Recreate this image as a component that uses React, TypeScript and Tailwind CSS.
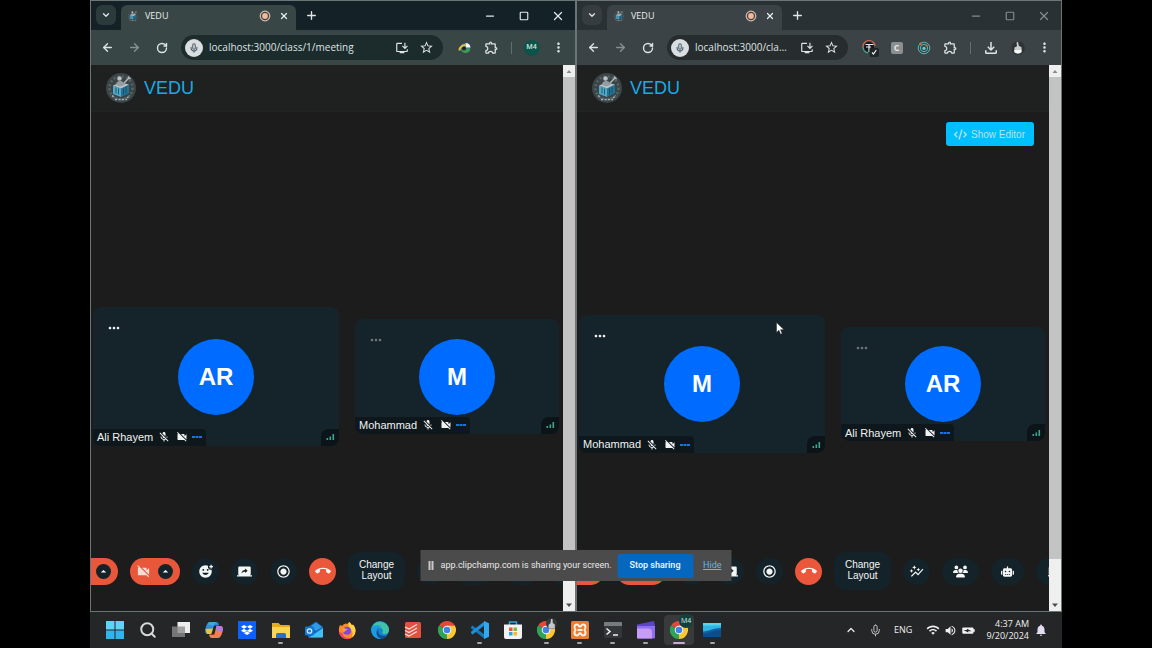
import type { ReactNode } from "react";
import { ArrowLeft, ArrowRight, ChevronDown, ChevronUp, Mic, Minus, Plus, RotateCw, Search, Square, X } from "lucide-react";
import {
  MdAddReaction,
  MdArrowDropUp,
  MdAutoGraph,
  MdBatteryChargingFull,
  MdCallEnd,
  MdMicOff,
  MdMoreHoriz,
  MdMoreVert,
  MdNotifications,
  MdOutlineExtension,
  MdOutlineFileDownload,
  MdOutlineInstallDesktop,
  MdRadioButtonChecked,
  MdScreenShare,
  MdStarBorder,
  MdVideocamOff,
  MdVolumeUp,
  MdWifi,
} from "react-icons/md";
import { FaChalkboard, FaCode, FaDropbox, FaRobot, FaUsers } from "react-icons/fa6";

type Theme = "teal" | "slate";

const themes = {
  teal: {
    strip: "bg-[#142227]",
    bar: "bg-[#384646]",
    chip: "bg-[#2b3b3c]",
    pill: "bg-[#1c2b2c]",
    controls: "text-[#e2e6e6]",
  },
  slate: {
    strip: "bg-[#2a3134]",
    bar: "bg-[#3c4347]",
    chip: "bg-[#363c3f]",
    pill: "bg-[#272c2e]",
    controls: "text-[#85898b]",
  },
};

function Emblem({ className }: { className: string }) {
  return (
    <svg viewBox="0 0 30 30" className={className} aria-hidden="true">
      <circle cx="15" cy="15" r="15" fill="#3b4547" />
      <circle cx="15" cy="15" r="11.5" fill="none" stroke="#8d9899" strokeWidth="2.600" strokeDasharray="2 2.200" opacity=".35" />
      <circle cx="15" cy="14" r="9.500" fill="#3b4547" />
      <path d="M7 12.500l8 3v8.500l-8-3z" fill="#4fa9c8" />
      <path d="M23 11.500l-8 4V24l8-4z" fill="#1f7599" />
      <path d="M7 12.500l7.500-3 8.500 2-8 4z" fill="#b9c3c6" />
      <path d="M10 14.500v6M12.500 15.500v6M17.500 15.500v6M20 14v6" stroke="#21444f" strokeWidth=".8" />
      <circle cx="13.500" cy="5.500" r="2.300" fill="#b9c1c3" />
      <path d="M10 12c0-3 2-4 4-4s4.500 1.500 4.500 4L14 13.500z" fill="#939ea1" />
      <path d="M18 10l5.500-5.500M22 3.500l2.500 2.500" stroke="#b5bec0" strokeWidth="1.400" />
      <path d="M6 22.500l3 2.500M9 26.500h12M21 25l3-2.500" stroke="#aab5b7" strokeWidth="1.500" strokeDasharray="2 1.500" />
    </svg>
  );
}

function BarButton({ label, children, dim = false }: { label: string; children: ReactNode; dim?: boolean }) {
  return (
    <button
      type="button"
      aria-label={label}
      className={`flex h-6 w-[27px] shrink-0 items-center justify-center ${dim ? "text-[#879193]" : "text-[#dfe4e4]"}`}
    >
      {children}
    </button>
  );
}

function TabStrip({ theme }: { theme: Theme }) {
  const t = themes[theme];
  return (
    <div className={`flex h-[29px] shrink-0 items-end ${t.strip}`}>
      <button
        type="button"
        aria-label="Search tabs"
        className={`mb-[5px] ml-[5px] flex h-5 w-5 items-center justify-center rounded-md text-[#e2e6e6] ${t.chip}`}
      >
        <ChevronDown size={10} strokeWidth={3} />
      </button>
      <div className={`ml-[5px] flex h-[25px] w-[175px] items-center rounded-t-md pb-[3px] pl-1.5 pr-[7px] ${t.bar}`}>
        <Emblem className="h-3 w-3" />
        <span className="ml-1.5 flex-1 text-[9px] text-[#e8ecec]">VEDU</span>
        <svg viewBox="0 0 12 12" className="mr-2 h-3 w-3" aria-hidden="true">
          <circle cx="6" cy="6" r="4.800" fill="none" stroke="#d9b9ac" strokeWidth="1.200" />
          <circle cx="6" cy="6" r="2.900" fill="#f4b79a" />
        </svg>
        <button type="button" aria-label="Close tab" className="text-[#e8ecec]">
          <X size={10} strokeWidth={3} />
        </button>
      </div>
      <button type="button" aria-label="New tab" className="mb-2 ml-[9px] text-[#e2e6e6]">
        <Plus size={13} strokeWidth={2.5} />
      </button>
      <div className={`ml-auto flex h-full items-center ${t.controls}`}>
        <button type="button" aria-label="Minimize" className="flex h-full w-[34px] items-center justify-center">
          <Minus size={12} strokeWidth={2.5} />
        </button>
        <button type="button" aria-label="Maximize" className="flex h-full w-[34px] items-center justify-center">
          <Square size={10} strokeWidth={2.8} />
        </button>
        <button type="button" aria-label="Close" className="flex h-full w-[34px] items-center justify-center">
          <X size={14} strokeWidth={2.2} />
        </button>
      </div>
    </div>
  );
}

function AddressBar({ theme, extras }: { theme: Theme; extras: ReactNode }) {
  const t = themes[theme];
  return (
    <div className={`flex h-[35px] shrink-0 items-center px-[3px] ${t.bar}`}>
      <BarButton label="Back">
        <ArrowLeft size={13} strokeWidth={2.5} />
      </BarButton>
      <BarButton label="Forward" dim>
        <ArrowRight size={13} strokeWidth={2.5} />
      </BarButton>
      <BarButton label="Reload">
        <RotateCw size={12} strokeWidth={2.8} />
      </BarButton>
      <div className={`ml-1.5 mr-2 flex h-[25px] min-w-0 flex-1 items-center rounded-full pl-1 pr-[5px] ${t.pill}`}>
        <span className="flex h-[18px] w-[18px] shrink-0 items-center justify-center rounded-full bg-[#d9dee0] text-[#4f5f6c]">
          <Mic size={10} strokeWidth={2.5} />
        </span>
        <input
          readOnly
          aria-label="Address"
          value="localhost:3000/class/1/meeting"
          className="ml-1.5 mr-1 min-w-0 flex-1 truncate bg-transparent text-[10px] text-[#dfe4e4] outline-none"
        />
        <button type="button" aria-label="Install app" className="flex w-6 shrink-0 justify-center text-[#dfe4e4]">
          <MdOutlineInstallDesktop size={14} />
        </button>
        <button type="button" aria-label="Bookmark this page" className="flex w-6 shrink-0 justify-center text-[#dfe4e4]">
          <MdStarBorder size={15} />
        </button>
      </div>
      {extras}
      <BarButton label="Browser menu">
        <MdMoreVert size={15} />
      </BarButton>
    </div>
  );
}

const Divider = () => (
  <span className="flex w-[13px] shrink-0 justify-center">
    <span className="h-3 w-px bg-[#5f6f72]" />
  </span>
);

const Extensions = () => (
  <BarButton label="Extensions">
    <MdOutlineExtension size={15} />
  </BarButton>
);

const tealExtras = (
  <>
    <BarButton label="Download manager">
      <svg viewBox="0 0 14 14" className="h-3.5 w-3.5" aria-hidden="true">
        <circle cx="7.500" cy="7" r="4.800" fill="#2f6fae" />
        <path d="M7.500 2a5 5 0 0 1 5 4.500L8 6.500z" fill="#f1f6f8" />
        <path d="M3 9l8-2 1.300 1.500A5 5 0 0 1 4 10.500z" fill="#3f9b4f" />
        <path d="M1.500 9.500C1.500 6 5 3.500 8 4.500" fill="none" stroke="#e8c23c" strokeWidth="2" />
        <circle cx="6" cy="7.500" r="2" fill="#1b2529" />
      </svg>
    </BarButton>
    <Extensions />
    <Divider />
    <BarButton label="Profile M4">
      <span className="flex h-4 w-4 items-center justify-center rounded-full bg-[#0e5349] text-[7px] font-semibold text-[#d6eae6]">M4</span>
    </BarButton>
  </>
);

const slateExtras = (
  <>
    <BarButton label="Tab helper">
      <svg viewBox="0 0 18 18" className="h-[18px] w-[18px]" aria-hidden="true">
        <path d="M2 8a6 6 0 0 1 12-1" fill="none" stroke="#df6a4a" strokeWidth="1.200" />
        <path d="M2 8a6 6 0 0 0 5 6" fill="none" stroke="#41b7a2" strokeWidth="1.200" />
        <circle cx="8" cy="8" r="5" fill="#16191b" />
        <path d="M4.500 5.500h8M5 8h5M8 5.500V13" stroke="#e8eaea" strokeWidth="1.200" />
        <rect x="8.500" y="9" width="9.500" height="9" rx="2" fill="#202527" />
        <path d="M11 13.500l1.500 1.500 2.800-4" fill="none" stroke="#f1f3f3" strokeWidth="1.200" />
      </svg>
    </BarButton>
    <BarButton label="Clipper">
      <span className="flex h-3 w-3 items-center justify-center rounded-[2px] bg-[#8b8f91] text-[9px] font-bold text-[#e4e6e6]">C</span>
    </BarButton>
    <BarButton label="Inspector">
      <svg viewBox="0 0 14 14" className="h-3.5 w-3.5" aria-hidden="true">
        <circle cx="7" cy="7" r="5.800" fill="none" stroke="#5bb5b4" strokeWidth="1" />
        <circle cx="7" cy="7" r="3.700" fill="none" stroke="#5bb5b4" strokeWidth="1" />
        <circle cx="7" cy="7.300" r="1.600" fill="#5fd0da" />
        <circle cx="3.600" cy="2.800" r="1.300" fill="#de6442" />
        <circle cx="9.600" cy="4.600" r="1.100" fill="#de6442" />
      </svg>
    </BarButton>
    <Extensions />
    <Divider />
    <BarButton label="Downloads">
      <MdOutlineFileDownload size={18} />
    </BarButton>
    <BarButton label="Profile">
      <Portrait className="h-3.5 w-3.5" />
    </BarButton>
  </>
);

function Portrait({ className }: { className: string }) {
  return (
    <svg viewBox="0 0 14 14" className={className} aria-hidden="true">
      <circle cx="7" cy="7" r="6.800" fill="#2e3335" />
      <path d="M5.500 1.500l1.500-.7.800 4 2.700 1.400.3 4.600c-2 2.200-6 2-7.600 0l.3-4.300 2.500-1.200z" fill="#c9cdce" />
      <path d="M3.500 9h6.800v2.200c-2 1.700-5 1.500-6.800 0z" fill="#f6f7f7" />
    </svg>
  );
}

function Scrollbar() {
  return (
    <div className="flex w-3 shrink-0 flex-col bg-[#efefef]" aria-hidden="true">
      <svg viewBox="0 0 12 12" className="h-3">
        <path d="M3.500 8L6 5l2.500 3z" fill="#8a8a8a" />
      </svg>
      <div className="flex-1 bg-[#c3c3c3]" />
      <svg viewBox="0 0 12 12" className="mt-10 h-3">
        <path d="M3 4.500h6L6 8z" fill="#4d4d4d" />
      </svg>
    </div>
  );
}

function Tile({ name, initials, muted = false }: { name: string; initials: string; muted?: boolean }) {
  return (
    <article className="relative flex aspect-video items-center justify-center overflow-hidden rounded-lg bg-[#15242b]">
      <button
        type="button"
        aria-label={`Options for ${name}`}
        className={`absolute left-[13px] top-[13px] ${muted ? "text-[#6d7679]" : "text-[#f2f4f4]"}`}
      >
        <MdMoreHoriz size={16} />
      </button>
      <div className="flex h-[76px] w-[76px] items-center justify-center rounded-full bg-[#006cff] text-[24px] font-bold text-white">
        {initials}
      </div>
      <div className="absolute bottom-0 left-0 flex h-[17px] items-center rounded-tr-[4px] bg-[#0e171c] pl-1 pr-1 text-[11px] text-[#f0f2f2]">
        <span>{name}</span>
        <MdMicOff size={12} className="ml-[5px]" />
        <MdVideocamOff size={12} className="ml-1.5" />
        <svg viewBox="0 0 10 4" className="ml-1 h-1 w-2.5" aria-hidden="true">
          <path d="M0 1h3v2H0zM3.500 1h3v2h-3zM7 1h3v2H7z" fill="#1672e8" />
        </svg>
      </div>
      <div className="absolute bottom-0 right-0 flex h-[17px] w-[18px] items-center justify-center rounded-tl-lg bg-[#0b1418]">
        <svg viewBox="0 0 9 8" className="h-2 w-[9px]" aria-label="Good connection">
          <path d="M.500 5h1.600v2H.5zM3.500 3.500h1.600V7H3.500zM6.500 1h1.600v6H6.500z" fill="#3fa58c" />
        </svg>
      </div>
    </article>
  );
}

function RoundButton({ label, children, width = "w-[27px]", tone = "bg-[#14232a]" }: { label: string; children: ReactNode; width?: string; tone?: string }) {
  return (
    <button
      type="button"
      aria-label={label}
      className={`flex h-[27px] shrink-0 items-center justify-center rounded-full text-[#f4f5f5] ${width} ${tone}`}
    >
      {children}
    </button>
  );
}

function SplitButton({ label, children }: { label: string; children: ReactNode }) {
  return (
    <div className="flex h-[27px] w-[50px] shrink-0 items-center justify-between rounded-full bg-[#e9573a] pl-1.5 pr-[7px]">
      <button type="button" aria-label={label} className="text-[#f6dcd5]">
        {children}
      </button>
      <button
        type="button"
        aria-label={`${label} options`}
        className="flex h-[15px] w-[15px] items-center justify-center rounded-full bg-[#14232a] text-white"
      >
        <MdArrowDropUp size={13} />
      </button>
    </div>
  );
}

function CallControls() {
  return (
    <div className="mb-[21px] flex shrink-0 items-center justify-center gap-3">
      <SplitButton label="Microphone">
        <MdMicOff size={15} />
      </SplitButton>
      <SplitButton label="Camera">
        <MdVideocamOff size={15} />
      </SplitButton>
      <RoundButton label="Reactions">
        <MdAddReaction size={15} />
      </RoundButton>
      <RoundButton label="Share screen">
        <MdScreenShare size={15} />
      </RoundButton>
      <RoundButton label="Record">
        <MdRadioButtonChecked size={15} />
      </RoundButton>
      <RoundButton label="Leave call" tone="bg-[#ea573a]">
        <MdCallEnd size={16} />
      </RoundButton>
      <button type="button" className="h-[38px] w-[57px] shrink-0 rounded-xl bg-[#14232a] pb-0.5 text-[10px] leading-[11px] text-[#f4f5f5]">
        Change Layout
      </button>
      <RoundButton label="Statistics">
        <MdAutoGraph size={15} />
      </RoundButton>
      <RoundButton label="Participants" width="w-[37px]">
        <FaUsers size={15} />
      </RoundButton>
      <RoundButton label="Assistant" width="w-[33px]">
        <FaRobot size={13} />
      </RoundButton>
      <RoundButton label="Whiteboard" width="w-9">
        <FaChalkboard size={13} />
      </RoundButton>
    </div>
  );
}

function MeetingWindow({ theme, extras, people, showEditor = false }: { theme: Theme; extras: ReactNode; people: [string, string][]; showEditor?: boolean }) {
  return (
    <section className="flex min-w-0 flex-1 flex-col border border-[#6b7576]">
      <TabStrip theme={theme} />
      <AddressBar theme={theme} extras={extras} />
      <div className="flex flex-1">
        <div className="flex min-w-0 flex-1 flex-col overflow-hidden bg-[#1c1c1c] font-['Liberation_Sans',Arial,sans-serif]">
          <header className="flex h-[47px] shrink-0 items-center border-b border-[#222424] bg-[#1f2020] pl-[15px]">
            <Emblem className="h-[30px] w-[30px]" />
            <h1 className="ml-2 text-[18px] text-[#18abe6]">VEDU</h1>
          </header>
          {showEditor ? (
            <div className="flex shrink-0 justify-end pr-[15px] pt-2.5">
              <button type="button" className="flex h-6 items-center gap-1 rounded-[3px] bg-[#00bfff] pl-2 pr-[9px] text-[10px] text-[#b4e3f4]">
                <FaCode size={13} />
                Show Editor
              </button>
            </div>
          ) : (
            <div className="h-[19px] shrink-0" />
          )}
          <main className="grid flex-1 grid-cols-[246fr_204fr] items-center gap-4 pl-0.5 pr-1 pt-[70px]">
            {people.map(([name, initials], i) => (
              <Tile key={name} name={name} initials={initials} muted={i > 0} />
            ))}
          </main>
          <CallControls />
        </div>
        <Scrollbar />
      </div>
    </section>
  );
}

function ChromeIcon({ children }: { children?: ReactNode }) {
  return (
    <svg viewBox="0 0 20 20" className="h-5 w-5 overflow-visible">
      <path d="M10 10L2.200 5.500A9 9 0 0 1 17.800 5.500z" fill="#e5483b" />
      <path d="M10 10L17.800 5.500A9 9 0 0 1 10 19z" fill="#fbc832" />
      <path d="M10 10v9A9 9 0 0 1 2.200 5.500z" fill="#2fa356" />
      <path d="M10 5.800h8a9 9 0 0 1 0 .1L14 12.500z" fill="#fbc832" />
      <path d="M2.200 5.500l4.200 7L10 14.500l-.500 4.500A9 9 0 0 1 2.200 5.500z" fill="#2fa356" />
      <circle cx="10" cy="10" r="4.300" fill="#f4f6f7" />
      <circle cx="10" cy="10" r="3.300" fill="#3f83e8" />
      {children}
    </svg>
  );
}

const box = "h-5 w-5";

const taskbarApps: { name: string; icon: ReactNode; state?: "open" | "active" }[] = [
  {
    name: "Start",
    icon: (
      <svg viewBox="0 0 20 20" className={box}>
        <path d="M1 1h8.500v8.500H1zM10.500 1H19v8.500h-8.500z" fill="#5fd3f7" />
        <path d="M1 10.500h8.500V19H1zM10.500 10.500H19V19h-8.500z" fill="#2fb4ee" />
      </svg>
    ),
  },
  { name: "Search", icon: <Search size={18} strokeWidth={2.6} className="text-[#d9d9d9]" /> },
  {
    name: "Task view",
    icon: (
      <svg viewBox="0 0 20 20" className={box}>
        <path d="M6.500 2H19v11H6.500z" fill="#ededed" />
        <path d="M1 6.500h13V17H1z" fill="#8b8b8b" opacity=".8" />
      </svg>
    ),
  },
  {
    name: "Copilot",
    icon: (
      <svg viewBox="0 0 20 20" className={box}>
        <path d="M6 2h6c2 0 2.500 1.500 3 3.500H10L7.500 14H3.500C1 14 .8 11 1.500 8.500 2.300 5 3.500 2 6 2z" fill="#2c8de0" />
        <path d="M1.500 9L3 14h4.500L9 8.500z" fill="#e6c53e" />
        <path d="M3.500 4.500C4.300 2.700 5 2 6.500 2H12L9.500 6z" fill="#3aa9dc" />
        <path d="M14 18H8c-2 0-2.500-1.500-3-3.500h5L12.500 6h4c2.500 0 2.700 3 2 5.500C17.700 15 16.500 18 14 18z" fill="#ef7f57" />
        <path d="M12.500 6h4c2.500 0 2.700 3 2 5.500l-7-1.500z" fill="#b67be0" />
        <path d="M7 14.500l2.200-6 3-1.500-1.500 7.500z" fill="#27282c" opacity=".5" />
      </svg>
    ),
  },
  {
    name: "Dropbox",
    icon: (
      <span className="flex h-[18px] w-[18px] items-center justify-center bg-[#0b62fb] text-white">
        <FaDropbox size={12} />
      </span>
    ),
  },
  {
    name: "File Explorer",
    state: "open",
    icon: (
      <svg viewBox="0 0 20 20" className={box}>
        <path d="M1 3h6.500l2 2H18a1 1 0 0 1 1 1v12H1z" fill="#e9a820" />
        <path d="M1 7h18v11H1z" fill="#fbd552" />
        <path d="M5 18v-3.500a1.500 1.500 0 0 1 1.500-1.500h7a1.500 1.500 0 0 1 1.500 1.500V18z" fill="#2076c4" />
      </svg>
    ),
  },
  {
    name: "Outlook",
    icon: (
      <svg viewBox="0 0 20 20" className={box}>
        <path d="M4 7l8-5.500L19 7v10.500H4z" fill="#1464b8" />
        <path d="M7 6l5-3.500L18 7l-6 4z" fill="#2f9be6" />
        <path d="M5 17.500L19 8v8.500a1 1 0 0 1-1 1z" fill="#41c1f2" />
        <rect x="1" y="6.500" width="9" height="9" rx="1.200" fill="#1277cf" />
        <circle cx="5.500" cy="11" r="2.200" fill="none" stroke="#cfe9fb" strokeWidth="1.300" />
      </svg>
    ),
  },
  {
    name: "Firefox",
    icon: (
      <svg viewBox="0 0 20 20" className={box}>
        <path d="M3 5l2 1c1-1.500 2-2 3.500-2.500C10 4 11 4 12 2c1.500 1 2.500 2.500 3 3.500l1-1C18 7 18.500 9 18.500 11a8.300 8.300 0 0 1-16.600 0C1.900 8.500 2 7 3 5z" fill="#ff8a27" />
        <path d="M12 2c1.500 1 2.500 2.500 3 3.500l1-1C18 7 18.500 9 18.500 11c0 2.500-1.500 5-3.500 6.500C17 12 14 9 12 7.500 11 5.500 11.500 4 12 2z" fill="#ffd43e" />
        <path d="M2 12a8.300 8.300 0 0 0 12 6c-5 .5-8-1-8.500-5z" fill="#f0436c" />
        <circle cx="10" cy="10.800" r="4" fill="#7b4be0" />
        <path d="M5.500 8c2 0 3 .5 5 1.500-1 1.500-3 1-3.500 3C5.800 11.500 5 10 5.500 8z" fill="#ff9d35" />
      </svg>
    ),
  },
  {
    name: "Edge",
    icon: (
      <svg viewBox="0 0 20 20" className={box}>
        <circle cx="10" cy="10" r="9" fill="#1685d0" />
        <path d="M2 7a9 9 0 0 1 17 2.500c.3 3-2 4.500-4.500 4.500-2 0-2.500-1-2-1.800 1-1.700 0-4.700-3.500-4.700C5.500 7.500 3 8 2 7z" fill="#3fc2a8" />
        <path d="M1.300 8C3 5.200 9.500 4 12 7.500c-3-1.500-5.800 1-5.800 4.200 0 3.500 2.500 6.500 5.500 7C6 20 .500 15 1.300 8z" fill="#1c9ce0" />
        <path d="M8.500 9.500c-1.500 4 2 7.500 8.500 6-1.500 2-3.500 3.300-5.500 3.400-5-1.400-6.500-7-3-9.400z" fill="#0f4e94" />
      </svg>
    ),
  },
  {
    name: "Todoist",
    icon: (
      <svg viewBox="0 0 20 20" className={box}>
        <rect x="2" y="2" width="16" height="16" rx="1.500" fill="#e3503f" />
        <path d="M2 7l4 2 8-4.500M2 10.500l4 2L14 8M2 14l4 2 8-4.500" fill="none" stroke="#fbe0db" strokeWidth="1.300" />
      </svg>
    ),
  },
  { name: "Chrome", icon: <ChromeIcon /> },
  {
    name: "Visual Studio Code",
    state: "open",
    icon: (
      <svg viewBox="0 0 20 20" className={box}>
        <path d="M1 7l1.500-1.500L15 15v4L1 8.300z" fill="#1478be" />
        <path d="M1 13l1.500 1.500L15 5V1L1 11.700z" fill="#1d8fdc" />
        <path d="M14 1l5 2.300v13.400L14 19z" fill="#31a8f2" />
      </svg>
    ),
  },
  {
    name: "Microsoft Store",
    icon: (
      <svg viewBox="0 0 20 20" className={box}>
        <path d="M6.500 5V2h7v3" fill="none" stroke="#31a5e3" strokeWidth="1.500" />
        <path d="M1 4.500h18V17a2 2 0 0 1-2 2H3a2 2 0 0 1-2-2z" fill="#f1f2f3" />
        <path d="M6 7.500h3.500V11H6z" fill="#ee5330" />
        <path d="M10.500 7.500H14V11h-3.500z" fill="#7dba35" />
        <path d="M6 12h3.500v3.500H6z" fill="#2fa2ea" />
        <path d="M10.500 12H14v3.500h-3.500z" fill="#f9b824" />
      </svg>
    ),
  },
  {
    name: "Chrome, second profile",
    state: "open",
    icon: (
      <ChromeIcon>
        <circle cx="15.500" cy="3.500" r="5.500" fill="#35393b" />
        <path d="M15-1l1.500 0 .3 4 2 1.500v3.500c-2 1-5 1-6.300 0v-3l2-2z" fill="#c4c8c9" />
      </ChromeIcon>
    ),
  },
  {
    name: "XAMPP",
    state: "open",
    icon: (
      <svg viewBox="0 0 20 20" className={box}>
        <rect x="1" y="1" width="18" height="18" rx="1.500" fill="#ef7d30" />
        <path d="M7 4.500c2 0 1.500 2.200 3 2.200s1-2.200 3-2.200c3 0 3 3.500 1.500 5.500 1.500 2 1.500 5.500-1.500 5.500-2 0-1.500-2.200-3-2.200s-1 2.200-3 2.200c-3 0-3-3.500-1.500-5.500C4 8 4 4.500 7 4.500zM7.500 10h5" fill="none" stroke="#fff4ec" strokeWidth="1.900" />
      </svg>
    ),
  },
  {
    name: "Terminal",
    state: "open",
    icon: (
      <svg viewBox="0 0 20 20" className={box}>
        <rect x="1" y="2" width="18" height="16" rx="1" fill="#33373a" />
        <path d="M1 3a1 1 0 0 1 1-1h16a1 1 0 0 1 1 1v3H1z" fill="#777c7f" />
        <path d="M3.500 8.500L7 11.500l-3.500 3M10 15h5" fill="none" stroke="#f0f0f0" strokeWidth="1.500" />
      </svg>
    ),
  },
  {
    name: "Clipchamp",
    state: "open",
    icon: (
      <svg viewBox="0 0 20 20" className={box}>
        <path d="M1 4.500L18 1l1 5H1z" fill="#5b45c4" />
        <path d="M1 6h18v11.500a1 1 0 0 1-1 1H2a1 1 0 0 1-1-1z" fill="#8e6ff0" />
        <path d="M1 8.500h11a4 4 0 0 1 4 4v6H2a1 1 0 0 1-1-1z" fill="#c69cf7" />
      </svg>
    ),
  },
  {
    name: "Chrome, profile M4",
    state: "active",
    icon: (
      <span className="relative flex">
        <ChromeIcon />
        <span className="absolute -right-1 -top-1.5 flex h-3.5 w-3.5 items-center justify-center rounded-full bg-[#12413d] text-[7px] text-[#d6eae6]">M4</span>
      </span>
    ),
  },
  {
    name: "Screen recorder",
    state: "open",
    icon: (
      <svg viewBox="0 0 20 20" className={box}>
        <path d="M1 3h18v14H1z" fill="#0f5fa6" />
        <path d="M1 3h18v5C11 8 8 11 1 11.500z" fill="#2fb4e4" />
        <path d="M1 3h18v2.500H1z" fill="#56d3f1" />
        <path d="M1 14c7-.5 10-4 18-4v7H1z" fill="#0c4d8c" />
      </svg>
    ),
  },
];

function Taskbar() {
  return (
    <footer className="flex h-9 shrink-0 items-stretch bg-[#252627] pl-2 text-[#f0f0f0]">
      <nav aria-label="Taskbar" className="grid w-[631px] shrink-0 grid-cols-[repeat(19,minmax(0,1fr))]">
        {taskbarApps.map(({ name, icon, state }) => (
          <button key={name} type="button" aria-label={name} className="relative flex items-center justify-center">
            <span className={`flex h-[30px] w-[30px] items-center justify-center rounded ${state === "active" ? "bg-[#383a3b]" : ""}`}>{icon}</span>
            {state === "open" && <span className="absolute bottom-1 h-0.5 w-[5px] rounded-full bg-[#a3a5a6]" />}
            {state === "active" && <span className="absolute bottom-1 h-0.5 w-3 rounded-full bg-[#c9a9d6]" />}
          </button>
        ))}
      </nav>
      <div className="ml-auto flex items-center pr-3.5">
        <button type="button" aria-label="Hidden icons">
          <ChevronUp size={12} strokeWidth={2.4} />
        </button>
        <Mic size={13} strokeWidth={1.8} className="ml-3 text-[#c8c8c8]" />
        <span className="ml-3 text-[9px]">ENG</span>
        <MdWifi size={14} className="ml-3.5" />
        <MdVolumeUp size={13} className="ml-1" />
        <MdBatteryChargingFull size={15} className="ml-1 rotate-90" />
        <div className="ml-2.5 text-right text-[9px] leading-3">
          <div>4:37 AM</div>
          <div>9/20/2024</div>
        </div>
        <MdNotifications size={14} className="ml-[5px] text-[#e4dcf0]" />
      </div>
    </footer>
  );
}

function SharingNotice() {
  return (
    <div
      role="status"
      className="absolute bottom-[31px] left-1/2 flex h-[31px] w-[311px] -translate-x-1/2 items-center whitespace-nowrap bg-[#4b4b4b] pl-2 pr-2.5 font-[Roboto,'Noto_Sans',sans-serif] text-[9px] text-[#e9e9e9]"
    >
      <span className="mr-[7px] flex gap-px" aria-hidden="true">
        <span className="h-[9px] w-0.5 bg-[#c9c9c9]" />
        <span className="h-[9px] w-0.5 bg-[#c9c9c9]" />
      </span>
      <span>app.clipchamp.com is sharing your screen.</span>
      <button type="button" className="ml-auto h-6 w-[76px] rounded-[2px] bg-[#0568be] font-semibold text-[#e8f2fa]">
        Stop sharing
      </button>
      <a href="#hide" className="ml-2.5 text-[#6db4de] underline">
        Hide
      </a>
    </div>
  );
}

export default function App() {
  return (
    <div className="flex min-h-screen flex-col bg-black px-[90px] font-['Open_Sans','Noto_Sans',sans-serif]">
      <div className="relative flex flex-1">
        <MeetingWindow
          theme="teal"
          extras={tealExtras}
          people={[
            ["Ali Rhayem", "AR"],
            ["Mohammad", "M"],
          ]}
        />
        <MeetingWindow
          theme="slate"
          extras={slateExtras}
          showEditor
          people={[
            ["Mohammad", "M"],
            ["Ali Rhayem", "AR"],
          ]}
        />
        <SharingNotice />
        <svg viewBox="0 0 9 13" className="absolute left-[686px] top-[322px] h-[13px] w-[9px]" aria-hidden="true">
          <path d="M.5.5v10l2.400-2.200 1.700 3.900 1.600-.7-1.700-3.800h3.500z" fill="#fff" stroke="#222" strokeWidth=".5" />
        </svg>
      </div>
      <Taskbar />
    </div>
  );
}
